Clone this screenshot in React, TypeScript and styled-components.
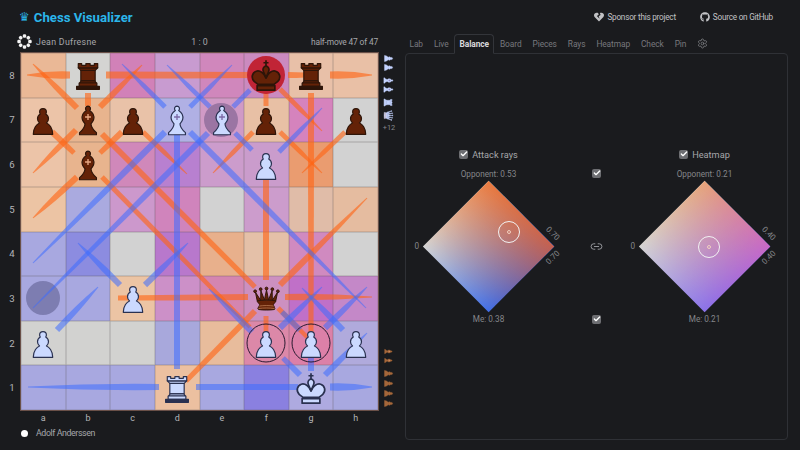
import type { ReactNode } from 'react'
import { Check, Link2, Settings } from 'lucide-react'
import { FaGithub, FaHeartBroken } from 'react-icons/fa'
import styled, { createGlobalStyle } from 'styled-components'

const GlobalStyle = createGlobalStyle`
  html, body {
    margin: 0;
    width: 800px;
    height: 450px;
    overflow: hidden;
    background: #1a1b1e;
    color: #c1c2c5;
    font-family: Roboto, 'Noto Sans', sans-serif;
  }
`

type PieceKind = 'p' | 'r' | 'b' | 'q' | 'k'
type Side = 'w' | 'b'

const SQUARES = [
  ['#eab896', '#d4d4d2', '#d181b8', '#c89bd0', '#d087bc', '#cb8abf', '#e8c0a8', '#e9c0a6'],
  ['#ecc4a8', '#e8b48e', '#e9c2a8', '#b0b0e4', '#d09ac6', '#e8c0a5', '#d583bd', '#d2d2d2'],
  ['#ecc4a8', '#e8b48e', '#d088ba', '#b880d0', '#cc9ccc', '#ca9ccc', '#ea9c70', '#d2d2d2'],
  ['#ecc4a4', '#aaaadf', '#cc98cc', '#d084bc', '#d2d2d2', '#cc9ccc', '#e0bca8', '#e5bca0'],
  ['#a8a8e0', '#8c8ce0', '#d2d2d2', '#b878cc', '#e8b08c', '#e4c0a8', '#d08ac0', '#d2d2d2'],
  ['#a8a8e0', '#a8a8e0', '#ecc4a4', '#cc90c8', '#d485b0', '#cc90c0', '#c070c8', '#c488c8'],
  ['#d2d2d0', '#d2d2d0', '#d2d2d0', '#a8a8dc', '#e8bc9c', '#dc88a8', '#dc80a8', '#b0aadc'],
  ['#a8a8e0', '#a8a8e0', '#a8a8e0', '#ecc0a0', '#a8a8e0', '#8a80e0', '#aeaae0', '#a8a8e0'],
]

const PIECES: Record<string, [PieceKind, Side]> = {
  b8: ['r', 'b'], f8: ['k', 'b'], g8: ['r', 'b'],
  a7: ['p', 'b'], b7: ['b', 'b'], c7: ['p', 'b'], d7: ['b', 'w'], e7: ['b', 'w'], f7: ['p', 'b'], h7: ['p', 'b'],
  b6: ['b', 'b'], f6: ['p', 'w'],
  c3: ['p', 'w'], f3: ['q', 'b'],
  a2: ['p', 'w'], f2: ['p', 'w'], g2: ['p', 'w'], h2: ['p', 'w'],
  d1: ['r', 'w'], g1: ['k', 'w'],
}

// x1, y1, x2, y2, start width, end width (page pixels)
type Ray = [number, number, number, number, number, number]

const ORANGE_RAYS: Ray[] = [
  [70, 75, 27, 75, 7, 1],
  [106, 75, 255, 75, 7, 6],
  [288, 75, 305, 75, 6, 5],
  [330, 75, 372, 75, 7, 1],
  [77, 108, 33, 64, 6, 1],
  [100, 107, 142, 65, 6, 1],
  [88, 93, 88, 106, 6, 6],
  [280, 89, 322, 131, 5, 1],
  [311, 93, 311, 335, 6, 5],
  [266, 93, 266, 106, 5, 5],
  [76, 130, 33, 173, 6, 1],
  [77, 177, 33, 218, 6, 1],
  [52, 132, 74, 153, 6, 5],
  [122, 132, 100, 153, 6, 5],
  [102, 134, 255, 287, 6, 5],
  [102, 177, 250, 327, 5, 4],
  [143, 132, 187, 174, 5, 1],
  [253, 132, 213, 173, 5, 1],
  [280, 132, 322, 173, 5, 1],
  [345, 132, 302, 173, 5, 1],
  [266, 280, 266, 177, 6, 6],
  [280, 285, 367, 198, 6, 1],
  [248, 297, 118, 298, 6, 5],
  [285, 297, 372, 297, 6, 1],
  [255, 311, 186, 381, 6, 5],
  [278, 308, 307, 337, 5, 4],
  [266, 316, 266, 358, 5, 1],
]

const BLUE_RAYS: Ray[] = [
  [165, 107, 122, 64, 5, 1],
  [190, 107, 232, 65, 5, 1],
  [210, 107, 167, 65, 5, 1],
  [233, 107, 250, 90, 5, 5],
  [177, 369, 177, 132, 6, 6],
  [165, 132, 33, 263, 6, 1],
  [190, 132, 366, 308, 6, 1],
  [208, 133, 33, 308, 6, 1],
  [235, 133, 252, 150, 5, 5],
  [279, 152, 322, 108, 5, 1],
  [120, 285, 78, 243, 6, 1],
  [145, 285, 188, 243, 6, 1],
  [57, 330, 98, 287, 6, 1],
  [280, 328, 322, 287, 6, 1],
  [300, 330, 282, 312, 6, 5],
  [325, 328, 367, 287, 6, 1],
  [343, 330, 302, 288, 6, 1],
  [252, 332, 209, 289, 6, 1],
  [325, 375, 367, 333, 6, 1],
  [300, 375, 283, 358, 6, 5],
  [311, 356, 311, 371, 6, 6],
  [330, 387, 372, 387, 7, 1],
  [196, 387, 298, 387, 6, 6],
  [159, 387, 28, 387, 6, 1],
]

function rayPath([x1, y1, x2, y2, w1, w2]: Ray) {
  const len = Math.hypot(x2 - x1, y2 - y1)
  const nx = -(y2 - y1) / len
  const ny = (x2 - x1) / len
  const mx = (x1 + x2) / 2
  const my = (y1 + y2) / 2
  const a = w1 / 2
  const b = w2 / 2
  // rays running out to the edge keep their width and narrow near the tip
  const k = w2 < w1 / 2 ? a * 1.25 : a
  return `M${x1 + nx * a} ${y1 + ny * a} Q${mx + nx * k} ${my + ny * k} ${x2 + nx * b} ${y2 + ny * b} L${x2 - nx * b} ${y2 - ny * b} Q${mx - nx * k} ${my - ny * k} ${x1 - nx * a} ${y1 - ny * a} Z`
}

function Piece({ kind, side, size = 38, mini }: { kind: PieceKind; side: Side; size?: number; mini?: boolean }) {
  let fill = side === 'w' ? '#cbd9ff' : '#642207'
  let line = side === 'w' ? '#2a3150' : '#2e1509'
  if (mini) {
    fill = side === 'w' ? '#c4d3ff' : '#a5673a'
    line = fill
  }
  return (
    <svg width={size} height={size} viewBox="0 0 45 45" fill={fill} stroke={line} strokeWidth="1.4" strokeLinejoin="round">
      {kind === 'p' && (
        <path d="M22.5 9c-2.21 0-4 1.79-4 4 0 .89.29 1.71.78 2.38C17.33 16.5 16 18.59 16 21c0 2.03.94 3.84 2.41 5.03-3 1.06-7.41 5.55-7.41 13.47h23c0-7.92-4.41-12.41-7.41-13.47 1.47-1.19 2.41-3 2.41-5.03 0-2.41-1.33-4.5-3.28-5.62.49-.67.78-1.49.78-2.38 0-2.21-1.79-4-4-4z" />
      )}
      {kind === 'r' && (
        <>
          <path d="M14 29.5V17h17v12.5z" />
          <path d="M14 17l-3-3h23l-3 3z" />
          <path d="M11 14V9h4v2h5V9h5v2h5V9h4v5z" />
          <path d="M12.5 32l2-2.5h16l2 2.5z" />
          <path d="M12 36v-4h21v4z" />
          <path d="M9 39.5h27V36H9z" fill={line} />
        </>
      )}
      {kind === 'b' && (
        <>
          <path d="M22.5 6a3 3 0 0 1 2 5.2c3.6 2.4 5.5 6.6 4.8 10.3-.4 2.5-2 4-3.3 5.5.3 4 3.5 8 6.5 10.5V40H12.5v-2.5c3-2.5 6.2-6.5 6.5-10.5-1.3-1.5-2.9-3-3.3-5.5-.7-3.7 1.2-7.9 4.8-10.3a3 3 0 0 1 2-5.2z" />
          <path d="M22.5 15.5v7M19 19h7" fill="none" stroke={side === 'w' ? '#7c6aa8' : '#e8a884'} strokeWidth="1.6" />
        </>
      )}
      {kind === 'q' && (
        <>
          <circle cx="6" cy="12" r="2" />
          <circle cx="14" cy="9" r="2" />
          <circle cx="22.5" cy="8" r="2" />
          <circle cx="31" cy="9" r="2" />
          <circle cx="39" cy="12" r="2" />
          <path d="M9 26c8.5-1.5 21-1.5 27 0l2.5-12.5L31 25l-.3-14.1-5.2 13.6-3-14.5-3 14.5-5.2-13.6L14 25 6.5 13.5 9 26z" />
          <path d="M9 26c0 2 1.5 2 2.5 4 1 1.5 1 1 .5 3.5-1.5 1-1.5 2.5-1.5 2.5-1.5 1.5.5 2.5.5 2.5 6.5 1 16.5 1 23 0 0 0 1.5-1 0-2.5 0 0 .5-1.5-1-2.5-.5-2.5-.5-2 .5-3.5 1-2 2.5-2 2.5-4-8.5-1.5-18.5-1.5-27 0z" />
          <path d="M12 33.5c6-1 15-1 21 0M11 37c7-1 16-1 23 0" fill="none" stroke="#c98a60" strokeWidth="1" />
        </>
      )}
      {kind === 'k' && (
        <>
          <path d="M22.5 5v7M19.5 8h6" fill="none" strokeWidth="2" />
          <path d="M22.5 26c-1.5-5-7-9.5-11.5-8-5 1.7-6.5 8-2.5 12 1.5 1.5 3.5 2.5 4.5 3.5h19c1-1 3-2 4.5-3.5 4-4 2.5-10.3-2.5-12-4.5-1.5-10 3-11.5 8z" strokeWidth="2" />
          <path d="M22.5 12c-2.5 0-4 3-3.5 5 .5 2 2 5 3.5 9 1.5-4 3-7 3.5-9 .5-2-1-5-3.5-5z" strokeWidth="2" />
          <rect x="12" y="35" width="21" height="5.5" strokeWidth="2" />
        </>
      )}
    </svg>
  )
}

function SpinnerMark() {
  return (
    <svg width="15" height="15" viewBox="0 0 16 16" fill="#f4f4f4">
      {[0, 45, 90, 135, 180, 225, 270, 315].map((a) => (
        <rect key={a} x="6.2" y="0.3" width="3.6" height="3.8" rx="1.4" transform={`rotate(${a} 8 8)`} />
      ))}
    </svg>
  )
}

function Tick({ children }: { children?: ReactNode }) {
  return (
    <TickRow>
      <TickBox>
        <Check size={8} strokeWidth={4} />
      </TickBox>
      {children}
    </TickRow>
  )
}

function Balance(props: {
  title: string
  top: string
  bottom: string
  side: string
  colors: [string, string, string]
  markerX: number
  markerY: number
}) {
  const [topColor, rightColor, bottomColor] = props.colors
  return (
    <BalanceColumn>
      <Tick>
        <TickLabel>{props.title}</TickLabel>
      </Tick>
      <TopAxisLabel>{props.top}</TopAxisLabel>
      <DiamondWrap>
        <Diamond $top={topColor} $right={rightColor} $bottom={bottomColor} />
        <ZeroLabel>0</ZeroLabel>
        <SideLabel $up>{props.side}</SideLabel>
        <SideLabel>{props.side}</SideLabel>
        <Marker style={{ left: props.markerX, top: props.markerY }} />
      </DiamondWrap>
      <BottomAxisLabel>{props.bottom}</BottomAxisLabel>
    </BalanceColumn>
  )
}

const TOP_CAPTURES: [PieceKind, number][] = [['p', 0], ['p', 0], ['b', 4], ['b', 0], ['r', 4], ['q', 4]]
const BOTTOM_CAPTURES: [PieceKind, number][] = [['b', 0], ['b', 0], ['p', 4], ['p', 1], ['p', 1], ['p', 1]]

export default function App() {
  return (
    <Page>
      <GlobalStyle />
      <LeftPane>
        <Title>
          <CrownGlyph>♛</CrownGlyph>
          Chess Visualizer
        </Title>
        <TopPlayerBar>
          <PlayerName $spacing={0.3}>
            <PlayerMark>
              <SpinnerMark />
            </PlayerMark>
            Jean Dufresne
          </PlayerName>
          <span>1 : 0</span>
          <MoveCount>half-move 47 of 47</MoveCount>
        </TopPlayerBar>
        <BoardRow>
          <Ranks>
            {[8, 7, 6, 5, 4, 3, 2, 1].map((r) => (
              <span key={r}>{r}</span>
            ))}
          </Ranks>
          <Board>
            <SquareGrid>
              {SQUARES.flat().map((c, i) => (
                <Square key={i} $color={c} />
              ))}
            </SquareGrid>
            <BoardOverlay viewBox="21 53 357 357">
              <circle cx="43" cy="298" r="17" fill="#4a4a78" opacity="0.45" />
              {ORANGE_RAYS.map((r, i) => (
                <path key={i} d={rayPath(r)} fill="#ff6414" opacity="0.62" />
              ))}
              {BLUE_RAYS.map((r, i) => (
                <path key={i} d={rayPath(r)} fill="#3d6cff" opacity="0.55" />
              ))}
              <circle cx="266" cy="75" r="19" fill="#c01f2e" opacity="0.95" />
              <circle cx="221" cy="120" r="17" fill="#5a4a78" opacity="0.45" />
              <circle cx="266" cy="343" r="19" fill="none" stroke="#2a1a30" strokeWidth="1" />
              <circle cx="311" cy="343" r="19" fill="none" stroke="#2a1a30" strokeWidth="1" />
            </BoardOverlay>
            <PieceGrid>
              {[8, 7, 6, 5, 4, 3, 2, 1].flatMap((rank) =>
                ['a', 'b', 'c', 'd', 'e', 'f', 'g', 'h'].map((file) => {
                  const piece = PIECES[file + rank]
                  return (
                    <PieceCell key={file + rank}>
                      {piece && <Piece kind={piece[0]} side={piece[1]} size={piece[0] === 'q' ? 31 : 38} />}
                    </PieceCell>
                  )
                }),
              )}
            </PieceGrid>
          </Board>
          <Captures>
            <CaptureGroup>
              {TOP_CAPTURES.map(([k, gap], i) => (
                <Captured key={i} $gap={gap}>
                  <Piece kind={k} side="w" size={k === 'p' ? 15 : 12} mini />
                </Captured>
              ))}
              <Plus>+12</Plus>
            </CaptureGroup>
            <CaptureGroup>
              {BOTTOM_CAPTURES.map(([k, gap], i) => (
                <Captured key={i} $gap={gap}>
                  <Piece kind={k} side="b" size={k === 'p' ? 13 : 10} mini />
                </Captured>
              ))}
            </CaptureGroup>
          </Captures>
        </BoardRow>
        <Files>
          {['a', 'b', 'c', 'd', 'e', 'f', 'g', 'h'].map((f) => (
            <span key={f}>{f}</span>
          ))}
        </Files>
        <PlayerBar>
          <PlayerName $spacing={-0.4}>
            <PlayerMark>
              <WhiteDot />
            </PlayerMark>
            Adolf Anderssen
          </PlayerName>
        </PlayerBar>
      </LeftPane>
      <RightPane>
        <TopLinks>
          <TopLink>
            <FaHeartBroken size={10} />
            Sponsor this project
          </TopLink>
          <TopLink>
            <FaGithub size={10} />
            Source on GitHub
          </TopLink>
        </TopLinks>
        <Tabs>
          {['Lab', 'Live', 'Balance', 'Board', 'Pieces', 'Rays', 'Heatmap', 'Check', 'Pin'].map((t) => (
            <Tab key={t} $active={t === 'Balance'}>
              {t}
            </Tab>
          ))}
          <TabGear>
            <Settings size={11} strokeWidth={1.6} />
          </TabGear>
        </Tabs>
        <Panel>
          <BalanceLayout>
            <Balance
              title="Attack rays"
              top="Opponent: 0.53"
              bottom="Me: 0.38"
              side="0.70"
              colors={['#ea7a3e', '#c4604f', '#3f6ee8']}
              markerX={75}
              markerY={40}
            />
            <MiddleColumn>
              <Tick />
              <Link2 size={13} strokeWidth={1.6} />
              <Tick />
            </MiddleColumn>
            <Balance
              title="Heatmap"
              top="Opponent: 0.21"
              bottom="Me: 0.21"
              side="0.40"
              colors={['#e6a277', '#c868c6', '#8a72ea']}
              markerX={59}
              markerY={55}
            />
          </BalanceLayout>
        </Panel>
      </RightPane>
    </Page>
  )
}

const Page = styled.div`
  width: 800px;
  height: 450px;
  display: flex;
  overflow: hidden;
`

const LeftPane = styled.div`
  width: 405px;
  flex: none;
  display: flex;
  flex-direction: column;
`

const Title = styled.h1`
  height: 34px;
  margin: 0;
  padding-left: 19px;
  box-sizing: border-box;
  display: flex;
  align-items: center;
  gap: 4px;
  font-size: 13.2px;
  font-weight: 700;
  color: #2bb6ea;
`

const CrownGlyph = styled.span`
  font-family: 'DejaVu Sans', sans-serif;
  font-size: 12px;
  font-weight: 400;
`

const PlayerBar = styled.div`
  width: 378px;
  height: 14px;
  padding-left: 21px;
  box-sizing: border-box;
  display: grid;
  grid-template-columns: 1fr auto 1fr;
  align-items: center;
  font-size: 8.8px;
  color: #a6a7ab;
`

const TopPlayerBar = styled(PlayerBar)`
  margin-bottom: 5px;
`

const PlayerName = styled.div<{ $spacing: number }>`
  display: flex;
  align-items: center;
  letter-spacing: ${(p) => p.$spacing}px;
`

const MoveCount = styled.span`
  text-align: right;
  font-size: 8.4px;
  letter-spacing: -0.15px;
`

const PlayerMark = styled.div`
  width: 19px;
  margin-left: -4px;
  flex: none;
  display: flex;
  align-items: center;
`

const WhiteDot = styled.div`
  width: 7px;
  height: 7px;
  margin-left: 4px;
  border-radius: 50%;
  background: #fff;
`

const BoardRow = styled.div`
  display: flex;
`

const Ranks = styled.div`
  width: 21px;
  display: grid;
  grid-template-rows: repeat(8, 1fr);
  justify-items: center;
  align-items: center;
  padding-left: 3px;
  box-sizing: border-box;
  font-size: 9.6px;
  color: #b4b5b8;
`

const Board = styled.div`
  position: relative;
  width: 357px;
  height: 357px;
  flex: none;
`

const SquareGrid = styled.div`
  width: 100%;
  height: 100%;
  display: grid;
  grid-template-columns: repeat(8, 1fr);
  grid-template-rows: repeat(8, 1fr);
  outline: 1px solid #6a5048;
`

const Square = styled.div<{ $color: string }>`
  background: ${(p) => p.$color};
  box-shadow: inset 0 0 0 0.5px rgba(90, 80, 80, 0.35);
`

const BoardOverlay = styled.svg`
  position: absolute;
  inset: 0;
  width: 100%;
  height: 100%;
`

const PieceGrid = styled.div`
  position: absolute;
  inset: 0;
  display: grid;
  grid-template-columns: repeat(8, 1fr);
  grid-template-rows: repeat(8, 1fr);
`

const PieceCell = styled.div`
  display: flex;
  align-items: center;
  justify-content: center;
`

const Captures = styled.div`
  width: 22px;
  padding: 1px 0 2px;
  display: flex;
  flex-direction: column;
  justify-content: space-between;
  align-items: center;
`

const CaptureGroup = styled.div`
  display: flex;
  flex-direction: column;
  align-items: center;
`

const Captured = styled.div<{ $gap: number }>`
  width: 12px;
  height: 9px;
  margin-top: ${(p) => p.$gap}px;
  display: flex;
  align-items: center;
  justify-content: center;
  transform: rotate(90deg);
`

const Plus = styled.div`
  margin-top: 3px;
  font-size: 7.4px;
  color: #85868a;
`

const Files = styled.div`
  width: 357px;
  height: 16px;
  margin-left: 21px;
  display: grid;
  grid-template-columns: repeat(8, 1fr);
  justify-items: center;
  align-items: center;
  font-size: 9px;
  color: #b4b5b8;
`

const RightPane = styled.div`
  flex: 1;
  padding-right: 12px;
  display: flex;
  flex-direction: column;
`

const TopLinks = styled.div`
  height: 34px;
  padding-right: 15px;
  display: flex;
  align-items: center;
  justify-content: flex-end;
  gap: 24px;
`

const TopLink = styled.a`
  display: flex;
  align-items: center;
  gap: 3px;
  font-size: 8.2px;
  letter-spacing: -0.23px;
  color: #c1c2c5;
`

const Tabs = styled.div`
  height: 19px;
  margin-left: -1px;
  display: flex;
  align-items: stretch;
`

const Tab = styled.div<{ $active: boolean }>`
  padding: 0 4.5px;
  display: flex;
  align-items: center;
  font-size: 8.4px;
  letter-spacing: -0.1px;
  font-weight: ${(p) => (p.$active ? 700 : 400)};
  color: ${(p) => (p.$active ? '#d8d9dc' : '#77787d')};
  border: 1px solid ${(p) => (p.$active ? '#33353a' : 'transparent')};
  border-bottom: 1px solid ${(p) => (p.$active ? '#1a1b1e' : 'transparent')};
  border-radius: 4px 4px 0 0;
  margin-bottom: -1px;
  z-index: 1;
`

const TabGear = styled.div`
  margin-left: 5px;
  display: flex;
  align-items: center;
  color: #85868a;
`

const Panel = styled.div`
  height: 387px;
  box-sizing: border-box;
  border: 1px solid #2f3136;
  border-radius: 4px;
  padding-bottom: 20px;
  display: flex;
  align-items: center;
  justify-content: center;
`

const BalanceLayout = styled.div`
  display: grid;
  grid-template-columns: 132px 84px 132px;
`

const BalanceColumn = styled.div`
  display: flex;
  flex-direction: column;
  align-items: center;
`

const MiddleColumn = styled.div`
  padding-top: 19px;
  display: flex;
  flex-direction: column;
  align-items: center;
  justify-content: space-between;
  color: #a6a7ab;
`

const TickRow = styled.div`
  height: 12px;
  display: flex;
  align-items: center;
  gap: 4px;
`

const TickBox = styled.span`
  width: 9px;
  height: 9px;
  border-radius: 2px;
  background: #6d6e72;
  color: #fff;
  display: flex;
  align-items: center;
  justify-content: center;
`

const TickLabel = styled.span`
  font-size: 9.2px;
  color: #a6a7ab;
`

const TopAxisLabel = styled.div`
  height: 15px;
  margin-top: 6px;
  display: flex;
  align-items: center;
  font-size: 8.2px;
  color: #85868a;
`

const BottomAxisLabel = styled(TopAxisLabel)`
  height: 12px;
  margin-top: 0;
`

const DiamondWrap = styled.div`
  position: relative;
  width: 132px;
  height: 132px;
  display: flex;
  align-items: center;
  justify-content: center;
`

const Diamond = styled.div<{ $top: string; $right: string; $bottom: string }>`
  position: relative;
  width: 93.3px;
  height: 93.3px;
  transform: rotate(45deg);
  background: linear-gradient(to right, #d6d6d4, ${(p) => p.$bottom});
  &::before {
    content: '';
    position: absolute;
    inset: 0;
    background: linear-gradient(to right, ${(p) => p.$top}, ${(p) => p.$right});
    mask-image: linear-gradient(to bottom, #000, transparent);
  }
`

const Marker = styled.div`
  position: absolute;
  width: 22px;
  height: 22px;
  box-sizing: border-box;
  border: 1px solid #f2f2f2;
  border-radius: 50%;
  display: flex;
  align-items: center;
  justify-content: center;
  &::after {
    content: '';
    width: 2px;
    height: 2px;
    border-radius: 50%;
    border: 0.5px solid #f2d0c0;
  }
`

const ZeroLabel = styled.span`
  position: absolute;
  left: -8px;
  top: 60px;
  font-size: 8.2px;
  color: #85868a;
`

const SideLabel = styled.span<{ $up?: boolean }>`
  position: absolute;
  left: 122px;
  top: ${(p) => (p.$up ? 48 : 72)}px;
  font-size: 8px;
  color: #85868a;
  transform: rotate(${(p) => (p.$up ? 45 : -45)}deg);
`
